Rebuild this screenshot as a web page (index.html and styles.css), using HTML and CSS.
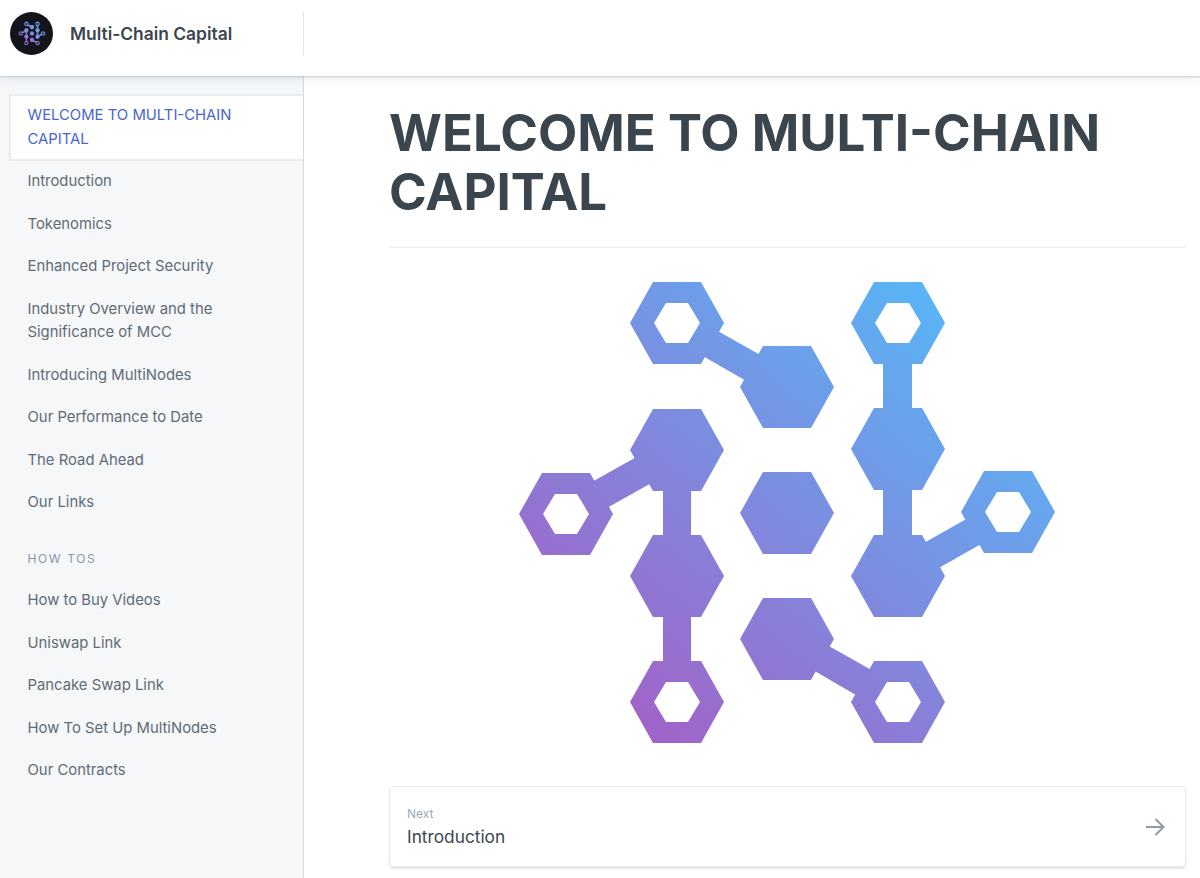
FILE: index.html
```html
<!DOCTYPE html>
<html lang="en">
<head>
    <meta charset="UTF-8">
    <meta name="viewport" content="width=device-width, initial-scale=1.0">
    <title>Multi-Chain Capital</title>
    <link rel="stylesheet" href="styles.css">
</head>
<body>
    <header class="top_bar">
        <div class="brand">
            <div class="brand_logo">
                <svg viewBox="510 270 556 486" width="28" height="25"><use href="#mark"></use></svg>
            </div>
            <span class="brand_name">Multi-Chain Capital</span>
        </div>
    </header>
    <div class="layout">
        <nav class="sidebar">
            <a class="nav_item active" href="#">WELCOME TO MULTI-CHAIN CAPITAL</a>
            <a class="nav_item" href="#">Introduction</a>
            <a class="nav_item" href="#">Tokenomics</a>
            <a class="nav_item" href="#">Enhanced Project Security</a>
            <a class="nav_item" href="#">Industry Overview and the Significance of MCC</a>
            <a class="nav_item" href="#">Introducing MultiNodes</a>
            <a class="nav_item" href="#">Our Performance to Date</a>
            <a class="nav_item" href="#">The Road Ahead</a>
            <a class="nav_item" href="#">Our Links</a>
            <div class="nav_heading">HOW TOS</div>
            <a class="nav_item" href="#">How to Buy Videos</a>
            <a class="nav_item" href="#">Uniswap Link</a>
            <a class="nav_item" href="#">Pancake Swap Link</a>
            <a class="nav_item" href="#">How To Set Up MultiNodes</a>
            <a class="nav_item" href="#">Our Contracts</a>
        </nav>
        <main class="content">
            <h1 class="title">WELCOME TO MULTI-CHAIN CAPITAL</h1>
            <div class="hero">
                <svg viewBox="510 270 556 486" width="556" height="486">
                    <defs>
                        <linearGradient id="mark_fill" gradientUnits="userSpaceOnUse" x1="975" y1="290" x2="600" y2="745">
                            <stop offset="0" stop-color="#55b9f8"></stop>
                            <stop offset="1" stop-color="#a65dc5"></stop>
                        </linearGradient>
                    </defs>
                    <g id="mark" fill="url(#mark_fill)" fill-rule="evenodd">
                        <!-- hollow hexagons -->
                        <path d="M630 323l23-41h48l23 41-23 41h-48zM654 323l12 20h22l12-20-12-20h-22z"></path>
                        <path d="M851 323l23-41h48l23 41-23 41h-48zM875 323l12 20h22l12-20-12-20h-22z"></path>
                        <path d="M519 514l23-41h48l23 41-23 41h-48zM543 514l12 20h22l12-20-12-20h-22z"></path>
                        <path d="M961 512l23-41h48l23 41-23 41h-48zM985 512l12 20h22l12-20-12-20h-22z"></path>
                        <path d="M630 702l23-41h48l23 41-23 41h-48zM654 702l12 20h22l12-20-12-20h-22z"></path>
                        <path d="M851 702l23-41h48l23 41-23 41h-48zM875 702l12 20h22l12-20-12-20h-22z"></path>
                        <!-- solid hexagons -->
                        <path d="M740 387l23-41h48l23 41-23 41h-48z"></path>
                        <path d="M851 449l23-41h48l23 41-23 41h-48z"></path>
                        <path d="M740 513l23-41h48l23 41-23 41h-48z"></path>
                        <path d="M630 450l23-41h48l23 41-23 41h-48z"></path>
                        <path d="M630 576l23-41h48l23 41-23 41h-48z"></path>
                        <path d="M851 576l23-41h48l23 41-23 41h-48z"></path>
                        <path d="M740 639l23-41h48l23 41-23 41h-48z"></path>
                        <!-- connectors, overlapping the hexagons they join -->
                        <path d="M716 330l46 26-14 26-47-27z"></path>
                        <path d="M883 360h29v50h-29z"></path>
                        <path d="M883 486h29v52h-29z"></path>
                        <path d="M922 544l46-26 15 25-46 26z"></path>
                        <path d="M590 483l50-28 15 26-50 28z"></path>
                        <path d="M663 487h28v50h-28z"></path>
                        <path d="M663 613h28v50h-28z"></path>
                        <path d="M827 645l48 27-14 26-48-28z"></path>
                    </g>
                </svg>
            </div>
            <a class="next_card" href="#">
                <span class="next_text">
                    <span class="next_label">Next</span>
                    <span class="next_title">Introduction</span>
                </span>
                <svg class="next_arrow" viewBox="0 0 24 24" width="24" height="24">
                    <path d="M3 12h17M12.5 4l8 8-8 8"></path>
                </svg>
            </a>
        </main>
    </div>
</body>
</html>
```

FILE: styles.css
```css
html, body { height: 100%; }
body { margin: 0; height: 878px; overflow: hidden; font-family: "Inter", "Liberation Sans", sans-serif; color: #3b454e; background: #fff; display: flex; flex-direction: column; }
a { text-decoration: none; color: inherit; }

.top_bar { height: 76px; flex: none; box-sizing: border-box; background: #fff; box-shadow: 0 1px 2px rgba(116, 129, 141, 0.35), 0 3px 12px rgba(116, 129, 141, 0.12); position: relative; padding-top: 12px; }
.brand { width: 304px; height: 43px; box-sizing: border-box; border-right: 1px solid #e0e5e9; padding-left: 10px; display: flex; align-items: center; }
.brand_logo { width: 43px; height: 43px; border-radius: 50%; background: #14141c; display: flex; align-items: center; justify-content: center; flex: none; }
.brand_name { margin-left: 17px; font-size: 17.4px; font-weight: 600; }

.layout { flex: 1; display: grid; grid-template-columns: 304px 1fr; min-height: 0; }

.sidebar { background: #f5f7f9; border-right: 1px solid #d4dadf; box-sizing: border-box; padding: 17.5px 0 0 9px; }
.nav_item { display: block; padding: 9.5px 24px 9.5px 18.5px; font-size: 14.85px; line-height: 23.5px; color: #5f6b76; }
.nav_item.active { color: #4a66cb; background: #fff; border: 2px solid #e6ecf1; border-right: 0; padding: 8.5px 24px 7.5px 16.5px; }
.nav_heading { padding: 27px 18.5px 12.5px; font-size: 12px; line-height: 16px; letter-spacing: 1.6px; color: #8797ab; }

.content { padding: 0 14px 0 85px; min-width: 0; }
.title { margin: 27px 0 0; padding-bottom: 26px; font-size: 51px; line-height: 59px; font-weight: 700; color: #3b454e; border-bottom: 1px solid #e6ecf1; }
.hero { display: flex; justify-content: center; padding-top: 22px; }

.next_card { margin-top: 30px; height: 81px; box-sizing: border-box; display: flex; align-items: center; justify-content: space-between; padding: 0 18px 0 17px; border: 1px solid #e6ecf1; border-radius: 4px; box-shadow: 0 2px 2px rgba(116, 129, 141, 0.2); }
.next_text { display: flex; flex-direction: column; }
.next_label { font-size: 12px; line-height: 18px; color: #9daab6; }
.next_title { font-size: 17.3px; line-height: 25px; padding-top: 1px; font-weight: 400; color: #3b454e; }
.next_arrow { fill: none; stroke: #8c9aa8; stroke-width: 2; }
```
